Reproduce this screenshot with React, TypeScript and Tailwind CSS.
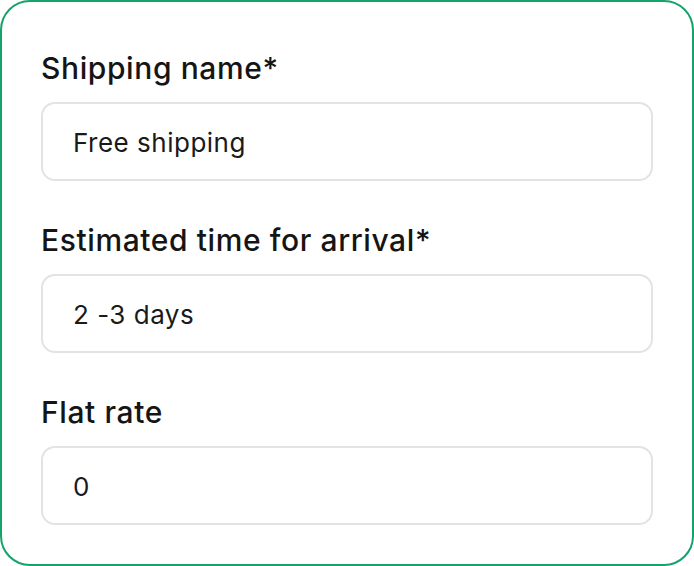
import React from "react";

const fields = [
  { label: "Shipping name*", value: "Free shipping" },
  { label: "Estimated time for arrival*", value: "2 -3 days" },
  { label: "Flat rate", value: "0" },
];

export default function App() {
  return (
    <div className="w-[694px] h-[566px] bg-white" style={{ fontFamily: "Inter, 'Noto Sans', sans-serif" }}>
      <div className="w-[694px] h-[566px] border-2 border-[#13a36b] rounded-[30px] px-[39px] pt-[48px] flex flex-col gap-[41px]">
        {fields.map((f) => (
          <div key={f.label} className="flex flex-col gap-[16px]">
            <label className="text-[30px] leading-[36px] font-medium text-[#151515] tracking-[0.6px]">{f.label}</label>
            <div className="h-[79px] border-2 border-[#e3e3e3] rounded-[14px] pl-[30px] pt-[2px] flex items-center text-[26px] text-[#1a1a1a] tracking-[0.5px]">
              {f.value}
            </div>
          </div>
        ))}
      </div>
    </div>
  );
}
